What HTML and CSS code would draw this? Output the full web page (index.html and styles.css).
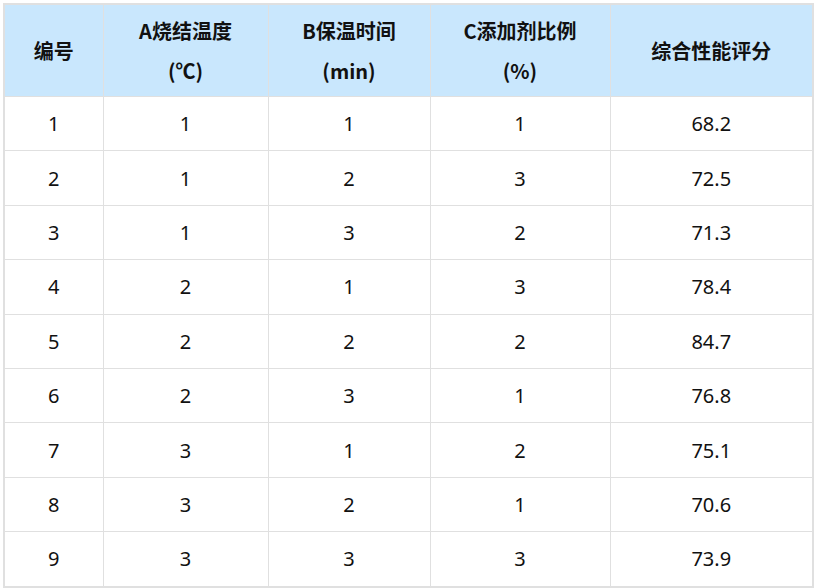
FILE: index.html
```html
<!DOCTYPE html>
<html lang="zh">
<head>
<meta charset="utf-8">
<link rel="stylesheet" href="styles.css">
</head>
<body>
<table class="grid">
  <colgroup>
    <col class="c1"><col class="c2"><col class="c3"><col class="c4"><col class="c5">
  </colgroup>
  <thead>
    <tr>
      <th>编号</th>
      <th>A烧结温度<br>(℃)</th>
      <th>B保温时间<br>(min)</th>
      <th>C添加剂比例<br>(%)</th>
      <th>综合性能评分</th>
    </tr>
  </thead>
  <tbody>
    <tr><td>1</td><td>1</td><td>1</td><td>1</td><td>68.2</td></tr>
    <tr><td>2</td><td>1</td><td>2</td><td>3</td><td>72.5</td></tr>
    <tr><td>3</td><td>1</td><td>3</td><td>2</td><td>71.3</td></tr>
    <tr><td>4</td><td>2</td><td>1</td><td>3</td><td>78.4</td></tr>
    <tr><td>5</td><td>2</td><td>2</td><td>2</td><td>84.7</td></tr>
    <tr><td>6</td><td>2</td><td>3</td><td>1</td><td>76.8</td></tr>
    <tr><td>7</td><td>3</td><td>1</td><td>2</td><td>75.1</td></tr>
    <tr><td>8</td><td>3</td><td>2</td><td>1</td><td>70.6</td></tr>
    <tr><td>9</td><td>3</td><td>3</td><td>3</td><td>73.9</td></tr>
  </tbody>
</table>
</body>
</html>
```
FILE: styles.css
```css
html, body {
  margin: 0;
  background: #ffffff;
}
body {
  padding: 3px 0 0 3px;
  font-family: "Noto Sans", "Noto Sans CJK SC", sans-serif;
  color: #111111;
}
.grid {
  border-collapse: collapse;
  table-layout: fixed;
  width: 809px;
  border: 2px solid #e0e0e0;
}
.c1 { width: 99px; }
.c2 { width: 165px; }
.c3 { width: 162px; }
.c4 { width: 180px; }
.c5 { width: 203px; }
.grid th, .grid td {
  border: 1px solid #e0e0e0;
  text-align: center;
  padding: 0;
}
.grid th {
  background: #c9e7fd;
  height: 91px;
  font-family: "Noto Sans CJK SC", sans-serif;
  font-weight: 700;
  font-size: 20px;
  line-height: 40px;
  color: #111111;
}
.grid td {
  height: 53.4px;
  font-size: 20px;
}
```
